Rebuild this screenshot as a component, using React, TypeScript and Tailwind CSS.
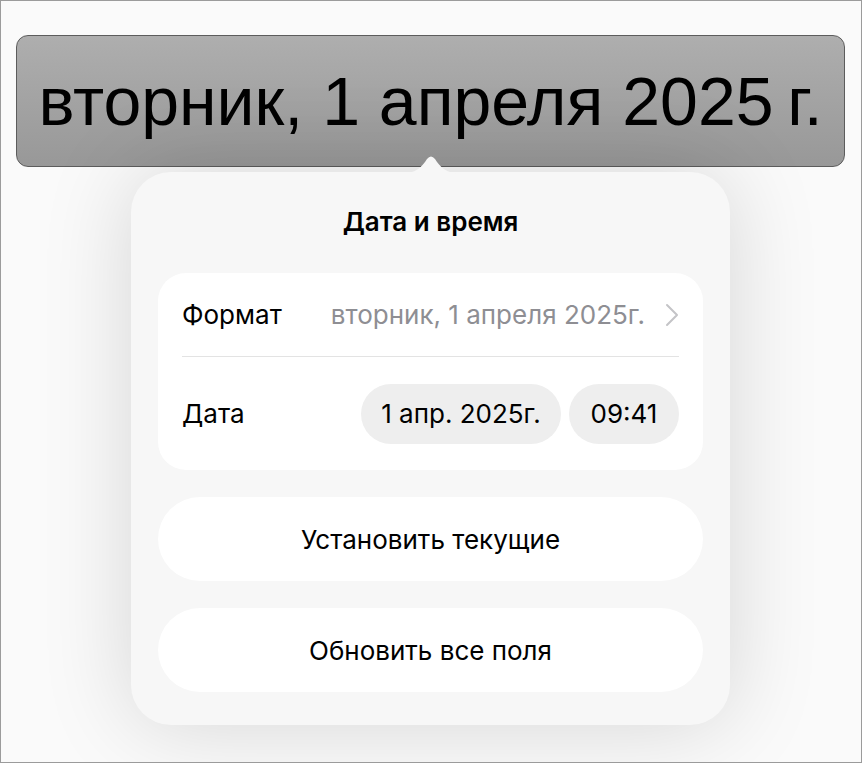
const sans = "font-['Inter','Noto_Sans',sans-serif]";

function Arrow() {
  // little notch that points from the sheet up to the selected field
  return (
    <svg
      className="absolute left-[266px] top-[-22px]"
      width="68"
      height="24"
      viewBox="0 0 68 24"
    >
      <path
        d="M0 24 C 16 24 22 20 28 12 L 30 9 Q 34 4 38 9 L 40 12 C 46 20 52 24 68 24 Z"
        fill="#f7f7f7"
      />
    </svg>
  );
}

function Chevron() {
  return (
    <svg width="14" height="24" viewBox="0 0 14 24" fill="none">
      <path d="M2 2 L12 12 L2 22" stroke="#c4c4c7" strokeWidth="2" strokeLinecap="round" strokeLinejoin="round" />
    </svg>
  );
}

function Chip({ children, className }: { children: React.ReactNode; className?: string }) {
  return (
    <div
      className={`flex h-[60px] items-center justify-center rounded-full bg-[#eeeeee] text-[26px] text-black ${className ?? ""}`}
    >
      {children}
    </div>
  );
}

function ActionButton({ label }: { label: string }) {
  return (
    <button className="flex h-[84px] w-full items-center justify-center rounded-[42px] bg-white text-[26px] text-black">
      {label}
    </button>
  );
}

export default function App() {
  return (
    <div className="relative h-[763px] w-[862px] overflow-hidden border border-[#9b9b9b] bg-[#fafafa]">
      {/* selected date field */}
      <div className="ml-[15px] mt-[34px] flex h-[132px] w-[829px] items-center justify-center rounded-[12px] border border-[#5c5c5c] bg-gradient-to-b from-[#aeaeae] to-[#989898]">
        <span className="font-['Liberation_Sans',Arial,sans-serif] text-[68px] leading-none text-black">
          вторник, 1 апреля 2025{"\u202F"}г.
        </span>
      </div>

      {/* date & time popover */}
      <div
        className={`relative ml-[130px] mt-[5px] flex h-[553px] w-[599px] flex-col rounded-[40px] bg-[#f7f7f7] px-[27px] pt-[36px] shadow-[0_0_90px_rgba(0,0,0,0.15)] ${sans}`}
      >
        <Arrow />
        <div className="h-[28px] text-center text-[26px] font-semibold leading-[28px] text-black">
          Дата и время
        </div>

        <div className="mt-[37px] rounded-[28px] bg-white px-[24px]">
          <div className="flex h-[83px] items-center justify-between">
            <span className="text-[26px] text-black">Формат</span>
            <span className="flex items-center gap-[20px] text-[26px] text-[#8e8e93]">
              вторник, 1 апреля 2025г.
              <Chevron />
            </span>
          </div>
          <div className="h-px bg-[#e3e3e3]" />
          <div className="flex h-[113px] items-center justify-between">
            <span className="text-[26px] text-black">Дата</span>
            <div className="flex gap-[8px]">
              <Chip className="w-[200px]">1 апр. 2025г.</Chip>
              <Chip className="w-[110px]">09:41</Chip>
            </div>
          </div>
        </div>

        <div className="mt-[27px] flex flex-col gap-[27px]">
          <ActionButton label="Установить текущие" />
          <ActionButton label="Обновить все поля" />
        </div>
      </div>
    </div>
  );
}
